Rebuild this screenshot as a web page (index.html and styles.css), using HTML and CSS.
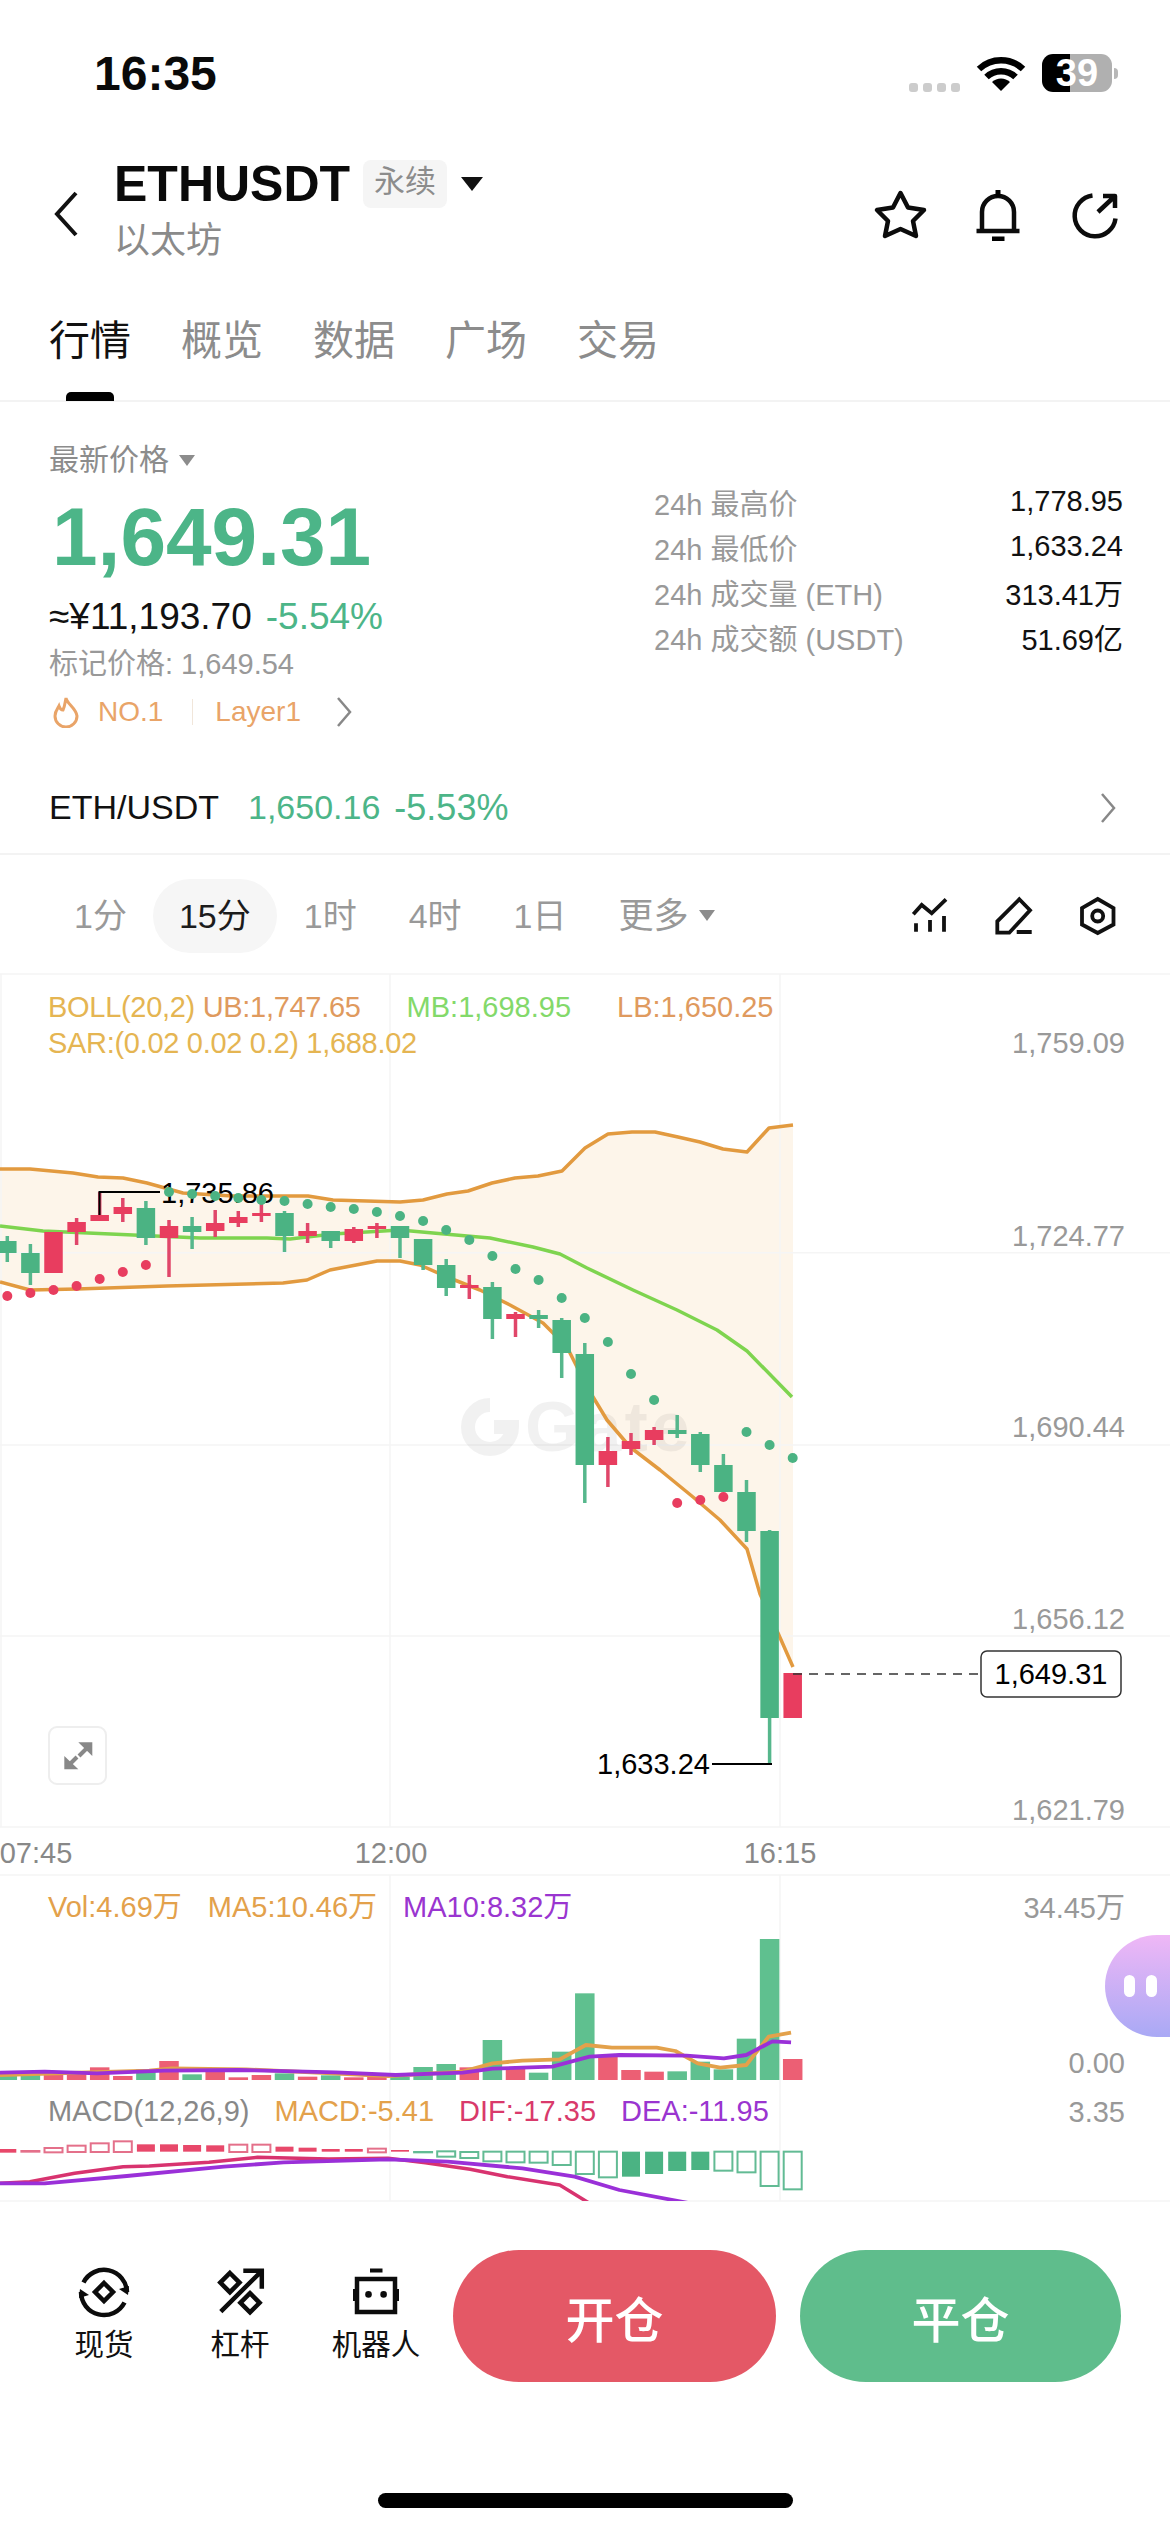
FILE: index.html
```html
<!DOCTYPE html>
<html lang="zh-CN">
<head>
<meta charset="utf-8">
<title>ETHUSDT</title>
<link rel="stylesheet" href="styles.css">
</head>
<body>
<div class="page">
  <div class="status">
    <span class="clock">16:35</span>
    <div class="status-right">
      <div class="signal"><i></i><i></i><i></i><i></i></div>
      <svg class="wifi" viewBox="0 0 50 38"><path class="wifi-arc" d="M3 15A32 32 0 0 1 47 15"/><path class="wifi-arc" d="M10.500 23A21 21 0 0 1 39.500 23"/><path class="wifi-fill" d="M25 37L16 28A13 13 0 0 1 34 28Z"/></svg>
      <div class="battery">39</div>
      <i class="battery-nub"></i>
    </div>
  </div>

  <header class="header">
    <svg class="back" viewBox="0 0 28 48"><path d="M24 3L5 24L24 45"/></svg>
    <div class="titles">
      <div class="title-row">
        <h1 class="symbol">ETHUSDT</h1>
        <span class="badge">永续</span>
        <i class="caret-big"></i>
      </div>
      <div class="subtitle">以太坊</div>
    </div>
    <div class="actions">
      <svg class="icon-star" viewBox="0 0 56 56"><polygon class="line" points="28.500,5 36,19.500 52,22 41,33 44,48 28.500,41 13,48 16,33 5,22 21,19.500"/></svg>
      <svg class="icon-bell" viewBox="0 0 48 56"><path class="line" d="M8 43V24A16 16 0 0 1 40 24V43M2.500 43H45.500"/><rect x="21.500" y="2" width="5" height="7"/><rect x="18" y="48.500" width="12.500" height="4.500"/></svg>
      <svg class="icon-share" viewBox="0 0 52 56"><path class="line" d="M24.500 7.500A20.500 20.500 0 1 0 47.500 30.500M30 24L46 9M35 8H47V20"/></svg>
    </div>
  </header>

  <nav class="tabs">
    <a class="tab tab-on">行情</a>
    <a class="tab">概览</a>
    <a class="tab">数据</a>
    <a class="tab">广场</a>
    <a class="tab">交易</a>
  </nav>

  <section class="quote">
    <div class="quote-left">
      <div class="price-label">最新价格<i class="caret-small"></i></div>
      <div class="price">1,649.31</div>
      <div class="fiat"><span>≈¥11,193.70</span><span class="up">-5.54%</span></div>
      <div class="mark">标记价格: 1,649.54</div>
      <div class="tags">
        <svg class="flame" viewBox="0 0 28 32"><path d="M14 2C15 8 24 12 25 20A11 11 0 0 1 3 20C3 15 6 12 7 10C8 13 10 14 11 14C13 10 13 6 14 2Z"/></svg>
        <span>NO.1</span>
        <i class="tag-sep"></i>
        <span>Layer1</span>
        <svg class="chev chev-tag" viewBox="0 0 16 32"><path d="M2 2L14 16L2 30"/></svg>
      </div>
    </div>
    <dl class="stats">
      <div class="stat"><dt>24h 最高价</dt><dd>1,778.95</dd></div>
      <div class="stat"><dt>24h 最低价</dt><dd>1,633.24</dd></div>
      <div class="stat"><dt>24h 成交量 (ETH)</dt><dd>313.41万</dd></div>
      <div class="stat"><dt>24h 成交额 (USDT)</dt><dd>51.69亿</dd></div>
    </dl>
  </section>

  <div class="spot-row">
    <span class="spot-name">ETH/USDT</span>
    <span class="up spot-price">1,650.16</span>
    <span class="up spot-change">-5.53%</span>
    <svg class="chev chev-spot" viewBox="0 0 16 32"><path d="M2 2L14 16L2 30"/></svg>
  </div>

  <div class="frames">
    <span class="frame">1分</span>
    <span class="frame frame-on">15分</span>
    <span class="frame frame-next">1时</span>
    <span class="frame">4时</span>
    <span class="frame">1日</span>
    <span class="frame frame-more">更多<i class="caret-small"></i></span>
    <div class="frame-tools">
      <svg viewBox="0 0 40 40"><path class="line-thin" d="M3.300 18.300L11.700 9L21.700 17.300L36 3.300M6 27.300V35.700M20 24V35.700M34 20V35.700"/></svg>
      <svg viewBox="0 0 40 40"><path class="line-thin" d="M25.300 3.300L36 14.300L15.300 36.700H3.300V25.300ZM22.700 36H37.700"/></svg>
      <svg viewBox="0 0 40 40"><polygon class="line-thin" points="19.700,3 35.500,12 35.500,28.500 19.700,37 4,28.500 4,12"/><circle class="line-thin" cx="19.700" cy="20" r="5.500"/></svg>
    </div>
  </div>

  <section class="chart">
    <svg id="canvas" class="canvas" viewBox="0 973 1170 1229"></svg>
    <div class="panel-main">
      <div class="legend legend-top">
        <span class="c-boll narrow">BOLL(20,2) <span class="c-orange">UB:1,747.65</span></span>
        <span class="c-mb">MB:1,698.95</span>
        <span class="c-orange">LB:1,650.25</span>
      </div>
      <div class="legend"><span class="c-boll narrow">SAR:(0.02 0.02 0.2) 1,688.02</span></div>
    </div>
    <div class="panel-time"></div>
    <div class="panel-vol">
      <div class="legend legend-vol">
        <span class="c-ma5">Vol:4.69万</span>
        <span class="c-ma5">MA5:10.46万</span>
        <span class="c-purple">MA10:8.32万</span>
      </div>
    </div>
    <div class="panel-macd">
      <div class="legend legend-macd">
        <span class="c-grey">MACD(12,26,9)</span>
        <span class="c-ma5">MACD:-5.41</span>
        <span class="c-dif">DIF:-17.35</span>
        <span class="c-purple">DEA:-11.95</span>
      </div>
    </div>
    <div class="floater"><i></i><i></i></div>
  </section>

  <footer class="bottom">
    <div class="tools">
      <div class="tool">
        <svg viewBox="0 0 52 52"><path class="line-tool" d="M5.500 16.500A23 23 0 0 1 49 26M3 26A23 23 0 0 0 46.500 36.500"/><polygon points="50,29 41,23 51,20"/><polygon points="2,23 11,29 1,32"/><polygon class="line-tool" points="26,17 35,26 26,35 17,26"/></svg>
        <span>现货</span>
      </div>
      <div class="tool">
        <svg viewBox="0 0 52 52"><path class="line-tool" d="M6.800 45.600L47.800 4.800M29.300 4.800H47.800V22.700"/><polygon class="line-tool" points="15.900,7 25.500,16.600 15.900,26.200 6.300,16.600"/><polygon class="line-tool" points="36,27.200 45.600,36.800 36,46.400 26.400,36.800"/></svg>
        <span>杠杆</span>
      </div>
      <div class="tool">
        <svg viewBox="0 0 58 52"><rect class="line-tool" x="10" y="13" width="38" height="33"/><rect x="6" y="23" width="4" height="12"/><rect x="48" y="23" width="4" height="12"/><rect x="23" y="2.500" width="12.500" height="4"/><circle cx="21.500" cy="28.400" r="3.300"/><circle cx="36.600" cy="28.400" r="3.300"/></svg>
        <span>机器人</span>
      </div>
    </div>
    <button class="trade trade-open">开仓</button>
    <button class="trade trade-close">平仓</button>
  </footer>
  <div class="home"></div>
</div>
<script src="chart.js"></script>
</body>
</html>
```
FILE: styles.css
```css
* { box-sizing: border-box; }
html, body { margin: 0; padding: 0; background: #fff; }
body { font-family: "Liberation Sans", "Noto Sans CJK SC", sans-serif; color: #111; }
.page { width: 1170px; height: 2532px; overflow: hidden; }
i { display: block; }
svg { display: block; flex: none; }

.status { height: 146px; display: flex; align-items: center; justify-content: space-between; padding: 0 52px 0 94px; }
.clock { font-size: 48px; font-weight: 700; color: #0a0a0a; }
.status-right { display: flex; align-items: center; }
.signal { display: flex; gap: 5.300px; margin: 28px 16px 0 0; }
.signal i { width: 8.800px; height: 9px; border-radius: 3px; background: #ccc; }
.wifi { width: 50px; height: 38px; margin-right: 16px; }
.wifi-arc { fill: none; stroke: #000; stroke-width: 6.500px; }
.wifi-fill { fill: #000; }
.battery { width: 70px; height: 38px; border-radius: 11px; background: linear-gradient(90deg, #000 40%, #b0b0b0 40%); color: #fff; font-size: 38px; font-weight: 700; line-height: 38px; text-align: center; }
.battery-nub { width: 4px; height: 11px; margin-left: 2px; border-radius: 0 4px 4px 0; background: #b8b8b8; }

.header { height: 156px; display: flex; align-items: flex-start; padding: 13px 50px 0 52px; }
.back { width: 28px; height: 48px; margin: 31px 34px 0 0; }
.back path { fill: none; stroke: #111; stroke-width: 4px; }
.titles { flex: 1; }
.title-row { display: flex; align-items: center; height: 50px; }
.symbol { margin: 0; font-size: 50px; line-height: 50px; font-weight: 700; color: #0a0a0a; }
.badge { width: 84px; height: 48px; margin-left: 13px; border-radius: 8px; background: #f5f5f5; color: #8c8c8c; font-size: 31px; line-height: 44px; text-align: center; }
.caret-big { width: 0; height: 0; margin-left: 14px; border-left: 11px solid transparent; border-right: 11px solid transparent; border-top: 14px solid #111; }
.subtitle { margin-top: 12px; font-size: 36px; line-height: 40px; color: #8a8a8a; }
.actions { display: flex; align-items: flex-start; margin-top: 29px; }
.line { fill: none; stroke: #0c0c0c; stroke-width: 4.500px; stroke-linejoin: round; }
.icon-star { width: 56px; height: 56px; margin-right: 46px; }
.icon-bell { width: 48px; height: 56px; margin-right: 46px; }
.icon-share { width: 52px; height: 56px; }

.tabs { height: 100px; display: flex; gap: 50px; padding: 19px 0 0 49px; border-bottom: 2px solid #f3f3f3; }
.tab { position: relative; font-size: 41px; line-height: 41px; height: 41px; color: #8c8c8c; }
.tab-on { color: #111; }
.tab-on::after { content: ""; position: absolute; left: 17px; top: 71px; width: 48px; height: 9px; border-radius: 5px 5px 0 0; background: #000; }

.quote { height: 364px; display: flex; justify-content: space-between; padding: 39px 47px 0 49px; }
.price-label { display: flex; align-items: center; font-size: 30px; line-height: 38px; color: #8c8c8c; }
.caret-small { width: 0; height: 0; margin-left: 10px; border-left: 8.500px solid transparent; border-right: 8.500px solid transparent; border-top: 11px solid #8c8c8c; }
.price { margin: 16px 0 0 3px; font-size: 82px; line-height: 84px; font-weight: 700; color: #4cb588; }
.up { color: #4cb588; }
.fiat { display: flex; gap: 14px; margin-top: 18px; font-size: 37px; line-height: 40px; }
.mark { margin-top: 9px; font-size: 29px; line-height: 36px; color: #999; }
.tags { display: flex; align-items: center; margin-top: 12px; height: 36px; font-size: 28px; color: #e9a468; }
.flame { width: 28px; height: 32px; margin: 0 18px 0 3px; }
.flame path { fill: none; stroke: #e9a468; stroke-width: 3px; }
.tag-sep { width: 1px; height: 26px; margin: 0 22px 0 29px; background: #f1e6da; }
.chev { width: 16px; height: 32px; }
.chev path { fill: none; stroke: #888; stroke-width: 2.500px; }
.chev-tag { margin-left: 35px; }
.stats { width: 469px; margin: 38px 0 0; }
.stat { display: flex; justify-content: space-between; height: 45px; align-items: center; font-size: 29px; }
.stat dt { color: #999; }
.stat dd { margin: 0; color: #111; }

.spot-row { height: 89px; display: flex; align-items: center; padding: 0 54px 4px 49px; font-size: 34px; border-bottom: 2px solid #f3f3f3; }
.spot-name { color: #111; margin-right: 29px; }
.spot-price { margin-right: 14px; }
.spot-change { font-size: 36px; }
.chev-spot { margin-left: auto; }

.frames { height: 118px; display: flex; align-items: center; padding: 3px 52px 0 48px; font-size: 34px; color: #999; }
.frame { height: 74px; padding: 0 26px; line-height: 74px; border-radius: 37px; }
.frame-on { background: #f6f6f6; color: #1c1c1c; }
.frame-next { margin-left: 1px; }
.frame-more { display: flex; align-items: center; padding-left: 26px; font-size: 35px; }
.frame-tools { display: flex; gap: 44px; margin-left: auto; }
.frame-tools svg { width: 40px; height: 40px; }
.line-thin { fill: none; stroke: #111; stroke-width: 3.800px; }

.chart { position: relative; height: 1229px; }
.canvas { position: absolute; left: 0; top: 0; width: 1170px; height: 1229px; }
.panel-main, .panel-time, .panel-vol, .panel-macd { position: relative; }
.panel-main { height: 854px; padding-top: 16px; }
.panel-time { height: 48px; }
.panel-vol { height: 207px; padding-top: 14px; }
.panel-macd { height: 120px; padding-top: 11px; }
.legend { display: flex; padding-left: 48px; font-size: 29px; line-height: 36px; white-space: nowrap; }
.legend-top { gap: 46px; }
.legend-vol { gap: 26px; }
.legend-macd { gap: 25px; }
.narrow { letter-spacing: -.300px; }
.c-boll { color: #e5b552; }
.c-orange { color: #df9a5e; }
.c-mb { color: #83d96a; }
.c-ma5 { color: #e3a14b; }
.c-purple { color: #9a35d0; }
.c-grey { color: #888; }
.c-dif { color: #d93a6b; }

.floater { position: absolute; right: 0; top: 962px; width: 65px; height: 102px; display: flex; justify-content: center; gap: 11px; align-items: center; padding-left: 5px; border-radius: 52px 0 0 52px / 51px 0 0 51px; background: linear-gradient(180deg, #efb7f6 0%, #a9a9f5 100%); }
.floater i { width: 11px; height: 22px; border-radius: 6px; background: #fff; }

.bottom { display: flex; align-items: flex-start; padding: 48px 49px 0 36px; }
.tools { display: flex; width: 408px; margin-right: 9px; padding-top: 16px; }
.tool { width: 136px; display: flex; flex-direction: column; align-items: center; font-size: 29.500px; line-height: 38px; color: #111; }
.tool svg { height: 52px; margin-bottom: 8px; fill: #0c0c0c; }
.line-tool { fill: none; stroke: #0c0c0c; stroke-width: 4.500px; }
.trade { height: 132px; border: 0; border-radius: 66px; color: #fff; font-family: inherit; font-size: 49px; font-weight: 500; padding: 0; }
.trade-open { width: 323px; background: #e45866; margin-right: 24px; }
.trade-close { width: 321px; background: #5fbd8c; }
.home { width: 415px; height: 15px; margin: 111px 0 0 378px; border-radius: 8px; background: #000; }

.grid { stroke: #f5f5f5; stroke-width: 1.500px; fill: none; }
.band { fill: #fdf5ea; }
.boll-line { fill: none; stroke: #e29a3f; stroke-width: 3.500px; stroke-linejoin: round; }
.mid-line { fill: none; stroke: #7ed44f; stroke-width: 3.500px; stroke-linejoin: round; }
.mark-text { fill: rgba(0, 0, 0, .055); font-size: 70px; font-weight: 700; letter-spacing: 3px; }
.mark-ring { fill: none; stroke: rgba(0, 0, 0, .055); stroke-width: 14px; }
.g-fill { fill: #4bb383; }
.r-fill { fill: #e83d5f; }
.g-wick { stroke: #56b78c; stroke-width: 3.500px; }
.r-wick { stroke: #e0466a; stroke-width: 3.500px; }
.axis { fill: #999; font-size: 29px; text-anchor: end; }
.time { fill: #888; font-size: 29px; text-anchor: middle; }
.hl-text { fill: #000; font-size: 29px; }
.hl-line { stroke: #000; stroke-width: 2px; fill: none; }
.dash { stroke: #333; stroke-width: 1.500px; stroke-dasharray: 9 7; }
.tag-box { fill: #fff; stroke: #333; stroke-width: 1.500px; }
.tag-text { fill: #000; font-size: 29px; text-anchor: middle; }
.expand-box { fill: #fff; stroke: #eee; stroke-width: 2px; }
.expand-arrow { fill: #888; }
.expand-line { stroke: #888; stroke-width: 4px; }
.vol-g { fill: #5fc08f; }
.vol-r { fill: #ec5f74; }
.ma5 { fill: none; stroke: #e3a14b; stroke-width: 3.800px; stroke-linejoin: round; }
.ma10 { fill: none; stroke: #9a30d8; stroke-width: 3.800px; stroke-linejoin: round; }
.dif { fill: none; stroke: #d8336f; stroke-width: 3.500px; stroke-linejoin: round; }
.hist-r { fill: #e8486a; }
.hist-g { fill: #4bb383; }
.hist-ro { fill: #fff; stroke: #e4708a; stroke-width: 2px; }
.hist-go { fill: #fff; stroke: #62bb94; stroke-width: 2px; }
```
FILE: chart.js
```js
(function () {
  var svg = document.getElementById('canvas');
  var NS = 'http://www.w3.org/2000/svg';
  function el(name, cls, attrs, text) {
    var e = document.createElementNS(NS, name);
    if (cls) e.setAttribute('class', cls);
    for (var k in attrs) e.setAttribute(k, attrs[k]);
    if (text) e.textContent = text;
    svg.appendChild(e);
    return e;
  }
  function cx(n) { return 7.3 + 23.1 * n; }
  function pts(a) { return a.map(function (p) { return p[0] + ',' + p[1]; }).join(' '); }
  function poly(a, cls, clip) {
    var e = el('polyline', cls, { points: pts(a) });
    if (clip) e.setAttribute('clip-path', 'url(#macdClip)');
    return e;
  }

  var upper = [[0,1169],[30,1169],[73,1173],[98,1177],[123,1178],[147,1183],[183,1193],[233,1196],[308,1196],[333,1200],[400,1202],[423,1200],[447,1194],[468,1191],[492,1183],[515,1178],[538,1176],[562,1171],[585,1148],[608,1134],[632,1132],[655,1132],[678,1137],[700,1142],[723,1149],[747,1152],[769,1128],[793,1125]];
  var middle = [[0,1226],[43,1231],[133,1235],[200,1238],[267,1238],[290,1239],[333,1234],[400,1230],[433,1233],[490,1238],[533,1247],[560,1254],[587,1268],[633,1290],[677,1310],[717,1330],[747,1351],[792,1397]];
  var lower = [[0,1282],[30,1290],[77,1289],[167,1286],[283,1283],[307,1280],[330,1270],[377,1261],[400,1261],[420,1265],[447,1277],[480,1290],[510,1305],[543,1323],[567,1347],[587,1387],[607,1420],[630,1447],[660,1470],[693,1497],[720,1520],[747,1549],[760,1594],[778,1633],[793,1667]];

  var defs = el('defs', '', {});
  var cp = document.createElementNS(NS, 'clipPath');
  cp.setAttribute('id', 'macdClip');
  var cr = document.createElementNS(NS, 'rect');
  cr.setAttribute('x', 0); cr.setAttribute('y', 2100); cr.setAttribute('width', 1170); cr.setAttribute('height', 101);
  cp.appendChild(cr); defs.appendChild(cp);

  // band and watermark
  el('polygon', 'band', { points: pts(upper.concat(lower.slice().reverse())) });

  // grid
  [[0, 974, 1170, 974], [0, 1252.7, 1170, 1252.7], [0, 1445, 1170, 1445], [0, 1636, 1170, 1636], [0, 1827, 1170, 1827], [0, 1875, 1170, 1875], [0, 2201, 1170, 2201],
   [390, 974, 390, 1827], [780, 974, 780, 1827], [390, 1875, 390, 2201], [780, 1875, 780, 2201], [1, 974, 1, 1827]].forEach(function (l) {
    el('line', 'grid', { x1: l[0], y1: l[1], x2: l[2], y2: l[3] });
  });

  el('path', 'mark-ring', { d: 'M490 1405A22 22 0 1 0 512 1427H494' });
  el('text', 'mark-text', { x: 525, y: 1451 }, 'Gate');

  poly(upper, 'boll-line');
  poly(lower, 'boll-line');
  poly(middle, 'mid-line');

  // candles: colour, wick top, body top, body bottom, wick bottom
  var candles = [
    ['g',1236,1241,1253,1262],['g',1244,1253,1273,1285],['r',1232,1232,1273,1273],['r',1218,1222,1232,1245],
    ['r',1192,1215,1221,1221],['r',1198,1207,1214,1222],['g',1201,1208,1238,1245],['r',1220,1226,1238,1277],
    ['g',1217,1226,1232,1249],['r',1210,1223,1231,1237],['r',1211,1217,1223,1227],['r',1203,1213,1216,1222],
    ['g',1211,1213,1236,1252],['r',1223,1231,1236,1243],['g',1231,1231,1241,1248],['r',1227,1229,1241,1243],
    ['r',1223,1226,1229,1238],['g',1226,1226,1238,1258],['g',1239,1239,1265,1270],['g',1259,1265,1288,1296],
    ['r',1275,1285,1288,1299],['g',1282,1287,1319,1339],['r',1312,1314,1319,1337],['g',1310,1315,1319,1328],
    ['g',1318,1320,1353,1378],['g',1343,1354,1465,1503],['r',1437,1451,1465,1487],['r',1433,1441,1449,1455],
    ['r',1427,1430,1440,1445],['g',1415,1430,1434,1438],['g',1432,1434,1465,1472],['g',1454,1465,1492,1492],
    ['g',1480,1492,1531,1542],['g',1530,1531,1718,1764],['r',1673,1673,1718,1718]
  ];
  candles.forEach(function (c, n) {
    var x = cx(n);
    el('line', c[0] + '-wick', { x1: x, y1: c[1], x2: x, y2: c[4] });
    el('rect', c[0] + '-fill', { x: x - 9.25, y: c[2], width: 18.5, height: c[3] - c[2] });
  });

  // high/low markers
  el('path', 'hl-line', { d: 'M99.500 1215V1192H160' });
  el('text', 'hl-text', { x: 161, y: 1203 }, '1,735.86');
  el('path', 'hl-line', { d: 'M712 1764H772' });
  el('text', 'hl-text', { x: 597, y: 1774 }, '1,633.24');

  // SAR dots
  var sar = [['r',1296],['r',1293],['r',1290],['r',1286],['r',1279],['r',1272],['r',1265],['g',1192],['g',1194],['g',1196],['g',1198],['g',1200],['g',1201],['g',1204],['g',1207],['g',1209],['g',1212],['g',1216],['g',1221],['g',1230],['g',1240],['g',1256],['g',1269],['g',1280],['g',1298],['g',1318],['g',1342],['g',1374],['g',1400],['r',1503],['r',1500],['r',1497],['g',1432],['g',1445],['g',1458]];
  sar.forEach(function (s, n) {
    el('circle', s[0] + '-fill', { cx: cx(n), cy: s[1], r: 5 });
  });

  // last price
  el('line', 'dash', { x1: 793, y1: 1674, x2: 981, y2: 1674 });
  el('rect', 'tag-box', { x: 981, y: 1651, width: 140, height: 46, rx: 6 });
  el('text', 'tag-text', { x: 1051, y: 1684 }, '1,649.31');

  // expand button
  el('rect', 'expand-box', { x: 49, y: 1727, width: 57, height: 57, rx: 8 });
  el('polygon', 'expand-arrow', { points: '92.3,1742.3 78.3,1742.3 92.3,1756' });
  el('polygon', 'expand-arrow', { points: '64.3,1756 64.3,1769.3 78.3,1769.3' });
  el('line', 'expand-line', { x1: 79, y1: 1756, x2: 86, y2: 1749 });
  el('line', 'expand-line', { x1: 70, y1: 1764, x2: 77, y2: 1757 });

  // axis
  [['1,759.09',1043],['1,724.77',1236],['1,690.44',1427],['1,656.12',1619],['1,621.79',1810],['34.45万',1908],['0.00',2063],['3.35',2112]].forEach(function (a) {
    el('text', 'axis', { x: 1125, y: a[1] + 10 }, a[0]);
  });
  [['07:45',36],['12:00',391],['16:15',780]].forEach(function (a) {
    el('text', 'time', { x: a[1], y: 1863 }, a[0]);
  });

  // volume (tops in crop units)
  function zy(z) { return 1800 + z / 3; }
  function zx(z) { return z / 1.34; }
  var vol = [['g',825],['g',822],['r',822],['r',822],['r',802],['r',828],['g',808],['r',783],['g',823],['r',812],['r',832],['r',825],['g',820],['r',830],['g',826],['r',832],['r',830],['g',830],['g',801],['g',792],['r',802],['g',720],['r',805],['g',818],['g',755],['g',580],['r',768],['r',810],['r',815],['g',814],['g',785],['g',808],['g',716],['g',417],['r',777]];
  vol.forEach(function (v, n) {
    el('rect', 'vol-' + v[0], { x: cx(n) - 9.75, y: zy(v[1]), width: 19.5, height: 2080 - zy(v[1]) });
  });
  function line(a) { return a.map(function (p) { return [zx(p[0]), zy(p[1])]; }); }
  poly(line([[0,825],[200,812],[230,805],[330,808],[520,828],[620,815],[660,790],[700,782],[750,778],[785,735],[820,743],[880,743],[905,753],[935,790],[965,803],[1000,795],[1030,710],[1060,698]]), 'ma5');
  poly(line([[0,818],[60,815],[130,820],[220,812],[320,810],[450,817],[530,825],[620,818],[660,806],[740,800],[790,770],[830,765],[920,767],[970,775],[1000,765],[1035,724],[1060,727]]), 'ma10');

  // MACD histogram: top, bottom, class
  var hist = [[1047,1058,'r'],[1053,1055,'ro'],[1044,1057,'ro'],[1037,1056,'ro'],[1030,1056,'ro'],[1024,1056,'ro'],[1033,1055,'r'],[1033,1055,'r'],[1035,1055,'r'],[1036,1055,'r'],[1034,1056,'ro'],[1034,1056,'ro'],[1040,1055,'r'],[1043,1055,'r'],[1047,1055,'r'],[1047,1055,'r'],[1046,1057,'ro'],[1050,1055,'r'],[1056,1057,'go'],[1054,1070,'go'],[1056,1074,'go'],[1055,1084,'go'],[1055,1087,'go'],[1055,1088,'go'],[1055,1095,'go'],[1055,1122,'go'],[1055,1132,'go'],[1055,1130,'g'],[1055,1122,'g'],[1055,1113,'g'],[1055,1110,'g'],[1055,1112,'go'],[1055,1117,'go'],[1055,1158,'go'],[1055,1168,'go']];
  hist.forEach(function (h, n) {
    el('rect', 'hist-' + h[2], { x: cx(n) - 9, y: zy(h[0]), width: 18, height: (h[1] - h[0]) / 3 });
  });
  poly(line([[0,1150],[40,1145],[100,1120],[165,1100],[200,1098],[280,1087],[345,1072],[440,1077],[520,1075],[570,1088],[630,1108],[680,1130],[750,1155],[790,1210]]), 'dif', true);
  poly(line([[0,1150],[60,1150],[170,1128],[300,1100],[380,1087],[520,1078],[600,1085],[700,1105],[770,1130],[830,1170],[925,1210]]), 'ma10', true);
})();
```
